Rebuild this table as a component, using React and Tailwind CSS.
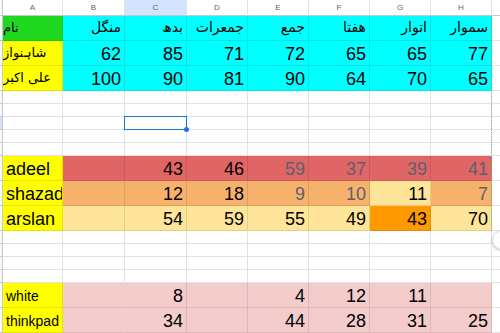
import React from 'react';

const COLS = 'grid grid-cols-[3px_60px_62px_62px_61px_61px_61px_61px_61px_8px]';
const FONT = "font-['Liberation_Sans','DejaVu_Sans',sans-serif]";
const URDU = "font-['DejaVu_Sans','Liberation_Sans',sans-serif]";

const GRAY = 'text-[#5f5f6f]';

const urduRows = [
  { name: 'نام', nameBg: 'bg-[#1fd81f]', values: ['منگل', 'بدھ', 'جمعرات', 'جمع', 'هفتا', 'اتوار', 'سموار'], urdu: true },
  { name: 'شاہنواز', nameBg: 'bg-[#ffff00]', values: ['62', '85', '71', '72', '65', '65', '77'] },
  { name: 'علی اکبر', nameBg: 'bg-[#ffff00]', values: ['100', '90', '81', '90', '64', '70', '65'] },
];

const scoreRows = [
  {
    name: 'adeel',
    cells: [
      ['bg-[#e06666]', ''],
      ['bg-[#e06666]', '43'],
      ['bg-[#e06666]', '46'],
      ['bg-[#e06666]', '59', true],
      ['bg-[#e06666]', '37', true],
      ['bg-[#e06666]', '39', true],
      ['bg-[#e06666]', '41', true],
    ],
  },
  {
    name: 'shazad',
    cells: [
      ['bg-[#f6b26b]', ''],
      ['bg-[#f6b26b]', '12'],
      ['bg-[#f6b26b]', '18'],
      ['bg-[#f6b26b]', '9', true],
      ['bg-[#f6b26b]', '10', true],
      ['bg-[#ffe599]', '11'],
      ['bg-[#f6b26b]', '7', true],
    ],
  },
  {
    name: 'arslan',
    cells: [
      ['bg-[#ffe599]', ''],
      ['bg-[#ffe599]', '54'],
      ['bg-[#ffe599]', '59'],
      ['bg-[#ffe599]', '55'],
      ['bg-[#ffe599]', '49'],
      ['bg-[#ff9900]', '43'],
      ['bg-[#ffe599]', '70'],
    ],
  },
];

const pinkRows = [
  { name: 'white', values: ['', '8', '', '4', '12', '11', ''] },
  { name: 'thinkpad', values: ['', '34', '', '44', '28', '31', '25'] },
];

const RowHead = ({ active }) => (
  <div className={`border-r border-b border-[#c7c7c7] ${active ? 'bg-[#d3e3fd]' : 'bg-[#f8f9fa]'}`} />
);

const Blank = ({ last }) => (
  <div className={`border-b border-[#e2e2e6] ${last ? '' : 'border-r'}`} />
);

const Value = ({ bg, children, muted, urdu, className = '' }) => (
  <div
    className={`${bg} border-r border-b border-black/10 flex items-end justify-end pr-[3px] overflow-hidden whitespace-nowrap leading-none ${
      urdu ? `${URDU} text-[14px] pb-[6px]` : 'text-[18px] pb-[2px]'
    } ${muted ? GRAY : 'text-black'} ${className}`}
  >
    {children}
  </div>
);

const EmptyRow = ({ selected }) => (
  <div className={`${COLS} h-[13px]`}>
    <RowHead active={selected} />
    <Blank />
    <Blank />
    {selected ? (
      <div className="relative border-r border-b border-[#e2e2e6]">
        <div className="absolute -inset-x-px -top-px bottom-[-1px] border border-[#1a73e8]" />
        <div className="absolute right-[-3px] bottom-[-3px] w-[5px] h-[5px] rounded-full bg-[#1a73e8]" />
      </div>
    ) : (
      <Blank />
    )}
    <Blank />
    <Blank />
    <Blank />
    <Blank />
    <Blank />
    <Blank last />
  </div>
);

export default function App() {
  const letters = ['A', 'B', 'C', 'D', 'E', 'F', 'G', 'H', ''];
  return (
    <div className={`w-[500px] h-[333px] overflow-hidden bg-white relative ${FONT}`}>
      {/* column header */}
      <div className={`${COLS} h-[16px]`}>
        <div className="bg-[#f8f9fa] border-r border-b border-[#c7c7c7]" />
        {letters.map((l, i) => (
          <div
            key={i}
            className={`flex items-center justify-center text-[8px] text-[#5f6368] border-b border-[#c7c7c7] ${
              i < 8 ? 'border-r border-r-[#e2e2e6]' : ''
            } ${l === 'C' ? 'bg-[#d3e3fd]' : 'bg-white'}`}
          >
            {l}
          </div>
        ))}
      </div>

      {/* urdu table */}
      {urduRows.map((row, r) => (
        <div key={r} className={`${COLS} h-[25px]`}>
          <RowHead />
          <div
            className={`${row.nameBg} ${URDU} text-[13px] leading-none border-r border-b border-black/10 flex items-end justify-end pr-[1px] pb-[6px] whitespace-nowrap overflow-hidden text-black`}
            dir="rtl"
          >
            {row.name}
          </div>
          {row.values.map((v, i) => (
            <Value key={i} bg="bg-[#00ffff]" urdu={row.urdu}>
              {v}
            </Value>
          ))}
          <Blank last />
        </div>
      ))}

      <EmptyRow />
      <EmptyRow />
      <EmptyRow selected />
      <EmptyRow />
      <EmptyRow />

      {/* scores */}
      {scoreRows.map((row) => (
        <div key={row.name} className={`${COLS} h-[25px]`}>
          <RowHead />
          <div className="bg-[#ffff00] border-r border-b border-black/10 flex items-end pl-[3px] pb-[2px] text-[18px] leading-none text-black whitespace-nowrap overflow-hidden">
            {row.name}
          </div>
          {row.cells.map(([bg, v, muted], i) => (
            <Value key={i} bg={bg} muted={muted}>
              {v}
            </Value>
          ))}
          <Blank last />
        </div>
      ))}

      <EmptyRow />
      <EmptyRow />
      <EmptyRow />
      <EmptyRow />

      {pinkRows.map((row) => (
        <div key={row.name} className={`${COLS} h-[25px]`}>
          <RowHead />
          <div className="bg-[#ffff00] border-r border-b border-black/10 flex items-end pl-[3px] pb-[4px] text-[14px] leading-none text-black whitespace-nowrap overflow-hidden">
            {row.name}
          </div>
          {row.values.map((v, i) => (
            <Value key={i} bg="bg-[#f4cccc]" className={i === 0 ? 'border-r-[#f4cccc]' : ''}>
              {v}
            </Value>
          ))}
          <Blank last />
        </div>
      ))}

      {/* dotted range edge lying over the grid */}
      <div className="absolute left-[491px] top-[16px] h-[215px] border-l border-dotted border-[#7fb07f]" />

      {/* side panel toggle, cut off at the right edge */}
      <div className="absolute left-[492px] top-[230px] w-[20px] h-[20px] rounded-full bg-white border border-[#dadce0] shadow-[0_1px_2px_rgba(0,0,0,0.25)]" />
    </div>
  );
}
